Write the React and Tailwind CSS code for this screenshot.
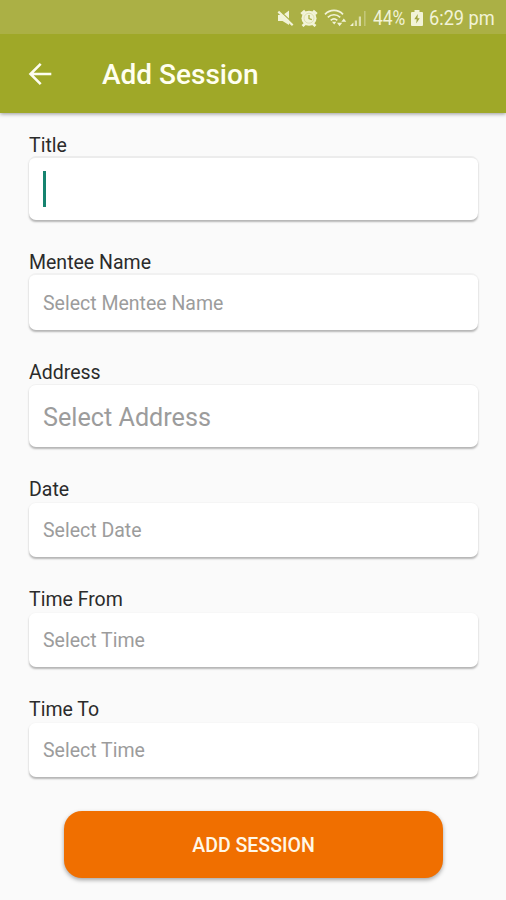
import { useState } from "react";

const fields = [
    { name: "title", label: "Title", placeholder: "", labelBox: "h-[22px] leading-[23px]", box: "h-16 mb-[31px] border-t-2 border-[#ececec]", text: "text-[25.3px]" },
    { name: "mentee", label: "Mentee Name", placeholder: "Select Mentee Name", labelBox: "h-[22px] leading-[23px]", box: "h-[57px] mb-[31px] border-t-2 border-[#f1f1f1]", text: "text-[19.5px] pt-[3px]" },
    { name: "address", label: "Address", placeholder: "Select Address", labelBox: "h-[23px] leading-[23px]", box: "h-[63px] mb-[31px] border-t border-[#f1f1f1]", text: "text-[25.2px] pt-[3px]" },
    { name: "date", label: "Date", placeholder: "Select Date", labelBox: "h-6 leading-[23px]", box: "h-[55px] mb-[31px] border-t border-[#f5f5f5]", text: "text-[19.5px] pt-0.5" },
    { name: "from", label: "Time From", placeholder: "Select Time", labelBox: "h-6 leading-[23px]", box: "h-[55px] mb-[31px] border-t border-[#f7f7f7]", text: "text-[19.5px] pt-0.5" },
    { name: "to", label: "Time To", placeholder: "Select Time", labelBox: "h-6 leading-[23px]", box: "h-[55px] mb-[34px] border-t border-[#f7f7f7]", text: "text-[19.5px] pt-px" },
];

function MuteIcon() {
    return (
        <svg className="w-[17px] h-[18px] shrink-0" viewBox="0 0 17 18" fill="currentColor">
            <path d="M1 6h5l6-4.5V16l-6.500-4H1z" />
            <path d="M2.300 1.500L16.500 14.500" stroke="#abb045" strokeWidth="1.2" />
            <path d="M1.300 2.600L15.700 16.200" stroke="currentColor" strokeWidth="2.2" />
        </svg>
    );
}

function AlarmIcon() {
    return (
        <svg className="w-[18px] h-[18px] shrink-0" viewBox="0 0 18 18" fill="none" stroke="currentColor">
            <circle cx="9" cy="9.2" r="7.5" fill="currentColor" stroke="none" />
            <path d="M1.300 5L5 1.700M16.700 5L13 1.700M2.500 17l3-2.500M15.500 17l-3-2.500" strokeWidth="2.8" />
            <circle cx="9" cy="9.2" r="5" stroke="#d3d699" strokeWidth="0.7" />
            <path d="M9 6v3.600l2.800 1" stroke="#abb045" strokeWidth="1.3" />
        </svg>
    );
}

function WifiIcon() {
    return (
        <svg className="w-[23px] h-[18px] shrink-0" viewBox="0 0 23 18" fill="none" stroke="currentColor" strokeWidth="1.7">
            <path d="M1 5.300C6 .1 14 .1 19 5.300M3.800 8.300c3.600-3.400 8.800-3.400 12.400 0M6.700 11.300c2-1.800 4.600-1.800 6.600 0" />
            <path d="M8 12.800h4.400l-2.200 2.700z" fill="currentColor" stroke="none" />
            <path d="M13 13.800h5.200l-2.600 3.400zM17.300 12.800h5l-2.500-3.300z" fill="currentColor" stroke="none" />
        </svg>
    );
}

function SignalIcon() {
    return (
        <svg className="w-[17px] h-[18px] shrink-0" viewBox="0 0 17 18" fill="currentColor">
            <path d="M0 17l3.400-3.400V17z" />
            <path d="M4.800 11.500H7V17H4.800z" opacity="0.7" />
            <path d="M8.800 7.500H11V17H8.800z" opacity="0.7" />
            <path d="M14 2h1.600v15H14z" opacity="0.35" />
        </svg>
    );
}

function BatteryIcon() {
    return (
        <svg className="w-3 h-[18px] shrink-0" viewBox="0 0 12 18">
            <path d="M3.500 1h5v2H11q1 0 1 1v12q0 1-1 1H1q-1 0-1-1V4q0-1 1-1h2.500z" fill="currentColor" />
            <path d="M6.800 5L3.300 10.200h2.400L5.200 14.500l3.500-5.300H6.500z" fill="#a0a53f" />
        </svg>
    );
}

function StatusBar() {
    return (
        <div className="h-[34px] bg-[#abb045] text-[#f2f3d8] flex items-center pl-[277px] pt-px">
            <MuteIcon />
            <div className="ml-1.5"><AlarmIcon /></div>
            <div className="ml-1.5"><WifiIcon /></div>
            <div className="ml-[3px]"><SignalIcon /></div>
            <span className="ml-[6px] w-[33px] text-xl leading-none whitespace-nowrap origin-left scale-x-[0.87] pt-px">44%</span>
            <div className="ml-[5px]"><BatteryIcon /></div>
            <span className="ml-[6px] w-[68px] text-xl leading-none whitespace-nowrap origin-left scale-x-[0.91] pt-px">6:29 pm</span>
        </div>
    );
}

function Header() {
    return (
        <header className="relative bg-[#9fa828] shadow-[0_1px_4px_rgba(0,0,0,0.4)]">
            <StatusBar />
            <div className="h-[79px] flex items-center pl-7">
                <button type="button" className="text-[#fdfdf0]">
                    <svg className="w-6 h-6" viewBox="0 0 24 24" fill="none" stroke="currentColor" strokeWidth="2.6">
                        <path d="M23.300 12H2.500M12.700 1.800L2.500 12l10.200 10.200" />
                    </svg>
                </button>
                <h1 className="ml-[50px] pt-0.5 text-[28px] font-medium text-[#fffff0] leading-none">Add Session</h1>
            </div>
        </header>
    );
}

function Field({ field, value, onChange }) {
    return (
        <label className="block">
            <span className={`${field.labelBox} block text-[19.5px] text-[#2b2b2b]`}>{field.label}</span>
            <div className={`${field.box} flex items-center rounded-[7px] bg-white pl-3.5 shadow-[0_2px_2px_-0.5px_rgba(0,0,0,0.28)]`}>
                {field.name === "title" && !value && <span className="w-[3px] h-9 bg-[#16836f]" />}
                <input name={field.name} value={value} onChange={onChange} placeholder={field.placeholder}
                    className={`${field.text} w-full bg-transparent outline-none text-[#2b2b2b] placeholder:text-[#9c9c9c] placeholder:opacity-100`} />
            </div>
        </label>
    );
}

function App() {
    const [formData, setFormData] = useState({
        title: "",
        mentee: "",
        address: "",
        date: "",
        from: "",
        to: ""
    });

    function handleChange(e) {
        setFormData(prev => ({ ...prev, [e.target.name]: e.target.value }));
    }

    return (
        <div className="w-full h-screen overflow-hidden bg-[#fafafa] font-[Roboto,sans-serif]">
            <Header />
            <form className="pt-[21px] pl-[29px] pr-7" onSubmit={e => e.preventDefault()}>
                {fields.map(field => (
                    <Field key={field.name} field={field} value={formData[field.name]} onChange={handleChange} />
                ))}
                <button type="submit"
                    className="block ml-[35px] w-[379px] h-[67px] pt-0.5 rounded-[18px] bg-[#f06f00] text-[#fff8e8] text-[19.5px] font-medium shadow-[0_2px_4px_rgba(0,0,0,0.35)]">
                    ADD SESSION
                </button>
            </form>
        </div>
    );
}

export default App;
